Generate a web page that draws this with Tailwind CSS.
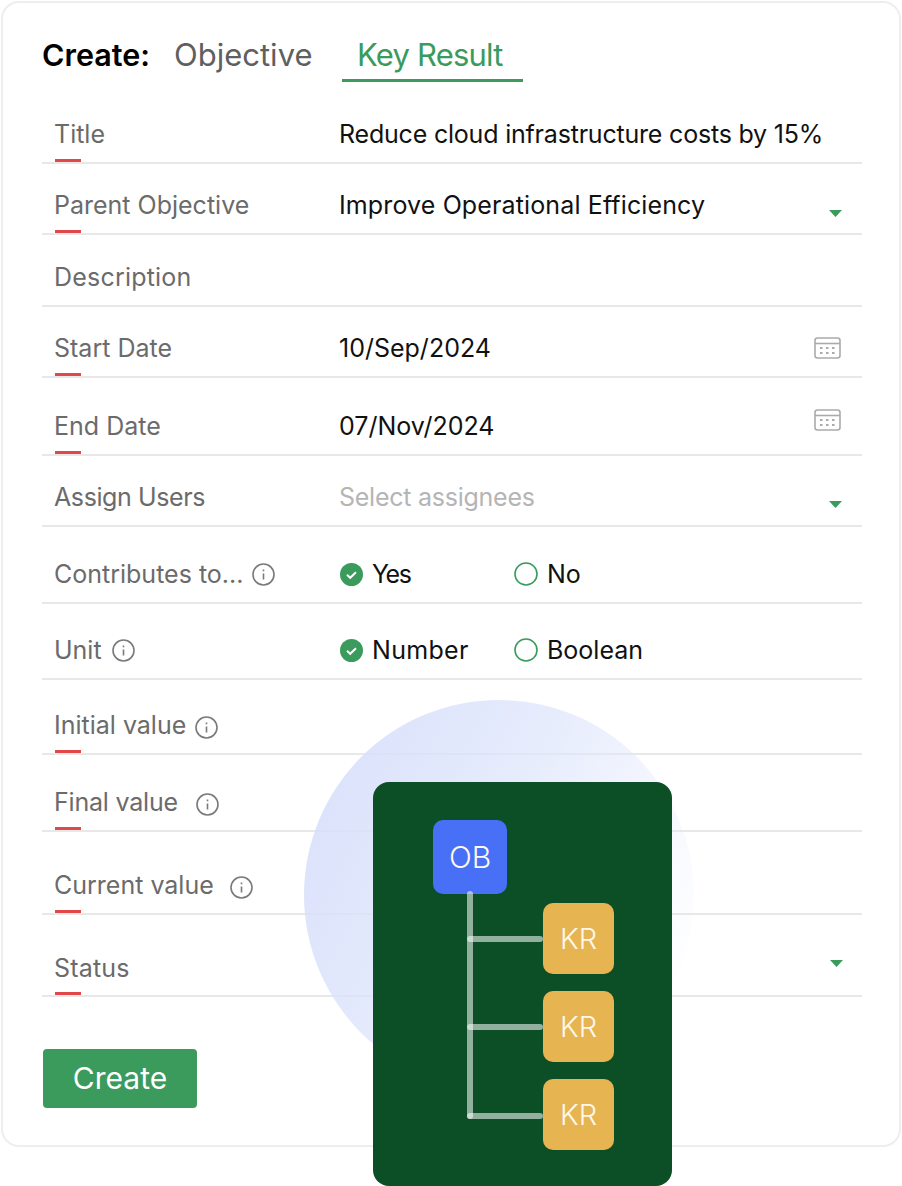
<!DOCTYPE html>
<html lang="en">
<head>
    <meta charset="UTF-8">
    <meta name="viewport" content="width=device-width, initial-scale=1.0">
    <title>Create Key Result</title>
    <script src="https://cdn.jsdelivr.net/npm/@tailwindcss/browser@4"></script>
</head>
<body class="bg-white font-['Inter',sans-serif] overflow-hidden">
    <div class="relative w-[902px] h-[1186px] overflow-hidden">
        <!-- Form card -->
        <div class="ml-px mt-px w-[900px] h-[1146px] rounded-[18px] border-2 border-[#eeeeee] pl-[39px] pr-[37px] pt-[32px]">
            <!-- Tabs -->
            <div class="flex items-start h-[47px] text-[31px] leading-[40px]">
                <span class="font-semibold text-black w-[132px] text-[30.5px]">Create:</span>
                <span class="text-[#5f5f5f] w-[168px]">Objective</span>
                <span class="text-[#3a9b5c] w-[181px] h-[47px] border-b-[3px] border-[#3a9b5c] pl-[15px] tracking-[-0.8px]">Key Result</span>
            </div>

            <!-- Rows -->
            <div class="text-[25px] leading-[32px] text-[#111111]">
                <div class="relative flex items-end h-[82px] border-b-2 border-[#e8e8e8] pb-[12px]">
                    <span class="w-[297px] pl-[12px] text-[#6b6b6b]">Title</span>
                    <span class="tracking-[-0.2px]">Reduce cloud infrastructure costs by 15%</span>
                    <i class="absolute left-[13px] bottom-0 w-[26px] h-[3px] bg-[#e0484a]"></i>
                </div>
                <div class="relative flex items-end h-[71px] border-b-2 border-[#e8e8e8] pb-[12px]">
                    <span class="w-[297px] pl-[12px] text-[#6b6b6b]">Parent Objective</span>
                    <span class="tracking-[0.13px]">Improve Operational Efficiency</span>
                    <svg class="ml-auto mr-[20px] mb-[4px]" width="13" height="7" viewBox="0 0 13 7"><path d="M0 0h13L6.500 7z" fill="#3a9b5c"/></svg>
                    <i class="absolute left-[13px] bottom-0 w-[26px] h-[3px] bg-[#e0484a]"></i>
                </div>
                <div class="relative flex items-end h-[72px] border-b-2 border-[#e8e8e8] pb-[12px]">
                    <span class="w-[297px] pl-[12px] text-[#6b6b6b] tracking-[0.2px]">Description</span>
                </div>
                <div class="relative flex items-end h-[71px] border-b-2 border-[#e8e8e8] pb-[12px]">
                    <span class="w-[297px] pl-[12px] text-[#6b6b6b]">Start Date</span>
                    <span>10/Sep/2024</span>
                    <svg class="ml-auto mr-[21px] mb-[5px]" width="27" height="22" viewBox="0 0 27 22" fill="none" stroke="#aaaaaa" stroke-width="1.600"><rect x="1" y="1" width="25" height="20" rx="2.500"/><path d="M1 6.500h25"/><path d="M6 11h2.500M12 11h2.500M18 11h2.500M6 16h2.500M12 16h2.500M18 16h2.500" stroke-width="2"/></svg>
                    <i class="absolute left-[13px] bottom-0 w-[26px] h-[3px] bg-[#e0484a]"></i>
                </div>
                <div class="relative flex items-end h-[78px] border-b-2 border-[#e8e8e8] pb-[12px]">
                    <span class="w-[297px] pl-[12px] text-[#6b6b6b]">End Date</span>
                    <span>07/Nov/2024</span>
                    <svg class="ml-auto mr-[21px] mb-[11px]" width="27" height="22" viewBox="0 0 27 22" fill="none" stroke="#aaaaaa" stroke-width="1.600"><rect x="1" y="1" width="25" height="20" rx="2.500"/><path d="M1 6.500h25"/><path d="M6 11h2.500M12 11h2.500M18 11h2.500M6 16h2.500M12 16h2.500M18 16h2.500" stroke-width="2"/></svg>
                    <i class="absolute left-[13px] bottom-0 w-[26px] h-[3px] bg-[#e0484a]"></i>
                </div>
                <div class="relative flex items-end h-[71px] border-b-2 border-[#e8e8e8] pb-[12px]">
                    <span class="w-[297px] pl-[12px] text-[#6b6b6b] tracking-[-0.4px]">Assign Users</span>
                    <span class="text-[#b5b5b5] tracking-[-0.25px]">Select assignees</span>
                    <svg class="ml-auto mr-[20px] mb-[5px]" width="13" height="7" viewBox="0 0 13 7"><path d="M0 0h13L6.500 7z" fill="#3a9b5c"/></svg>
                </div>
                <div class="relative flex items-end h-[77px] border-b-2 border-[#e8e8e8] pb-[12px]">
                    <span class="flex items-center gap-[9px] w-[298px] pl-[12px] text-[#6b6b6b]">Contributes to...
                        <svg width="23" height="23" viewBox="0 0 23 23" fill="none" stroke="#7a7a7a" stroke-width="1.600"><circle cx="11.500" cy="11.500" r="10.500"/><path d="M11.500 10.500v6M11.500 6.500v1.800"/></svg>
                    </span>
                    <span class="flex items-center gap-[9px] w-[174px]">
                        <svg width="23" height="23" viewBox="0 0 23 23"><circle cx="11.500" cy="11.500" r="11.500" fill="#3a9b5c"/><path d="M7 11.800l3.200 3 5.800-5.600" fill="none" stroke="#ffffff" stroke-width="2"/></svg><span class="tracking-[-1.5px]">Yes</span>
                    </span>
                    <span class="flex items-center gap-[9px]">
                        <svg width="24" height="24" viewBox="0 0 24 24"><circle cx="12" cy="12" r="11" fill="none" stroke="#3a9b5c" stroke-width="1.600"/></svg>No
                    </span>
                </div>
                <div class="relative flex items-end h-[76px] border-b-2 border-[#e8e8e8] pb-[12px]">
                    <span class="flex items-center gap-[10px] w-[298px] pl-[12px] text-[#6b6b6b]">Unit
                        <svg width="23" height="23" viewBox="0 0 23 23" fill="none" stroke="#7a7a7a" stroke-width="1.600"><circle cx="11.500" cy="11.500" r="10.500"/><path d="M11.500 10.500v6M11.500 6.500v1.800"/></svg>
                    </span>
                    <span class="flex items-center gap-[9px] w-[174px]">
                        <svg width="23" height="23" viewBox="0 0 23 23"><circle cx="11.500" cy="11.500" r="11.500" fill="#3a9b5c"/><path d="M7 11.800l3.200 3 5.800-5.600" fill="none" stroke="#ffffff" stroke-width="2"/></svg><span class="tracking-[0.3px]">Number</span>
                    </span>
                    <span class="flex items-center gap-[9px]">
                        <svg width="24" height="24" viewBox="0 0 24 24"><circle cx="12" cy="12" r="11" fill="none" stroke="#3a9b5c" stroke-width="1.600"/></svg>Boolean
                    </span>
                </div>
                <div class="relative flex items-end h-[75px] border-b-2 border-[#e8e8e8] pb-[12px]">
                    <span class="flex items-center gap-[9px] pl-[12px] text-[#6b6b6b]">Initial value
                        <svg class="mt-[4px]" width="23" height="23" viewBox="0 0 23 23" fill="none" stroke="#7a7a7a" stroke-width="1.600"><circle cx="11.500" cy="11.500" r="10.500"/><path d="M11.500 10.500v6M11.500 6.500v1.800"/></svg>
                    </span>
                    <i class="absolute left-[13px] bottom-0 w-[26px] h-[3px] bg-[#e0484a]"></i>
                </div>
                <div class="relative flex items-end h-[77px] border-b-2 border-[#e8e8e8] pb-[12px]">
                    <span class="flex items-center gap-[18px] pl-[12px] text-[#6b6b6b] tracking-[-0.2px]">Final value
                        <svg class="mt-[4px]" width="23" height="23" viewBox="0 0 23 23" fill="none" stroke="#7a7a7a" stroke-width="1.600"><circle cx="11.500" cy="11.500" r="10.500"/><path d="M11.500 10.500v6M11.500 6.500v1.800"/></svg>
                    </span>
                    <i class="absolute left-[13px] bottom-0 w-[26px] h-[3px] bg-[#e0484a]"></i>
                </div>
                <div class="relative flex items-end h-[83px] border-b-2 border-[#e8e8e8] pb-[12px]">
                    <span class="flex items-center gap-[16px] pl-[12px] text-[#6b6b6b]">Current value
                        <svg class="mt-[4px]" width="23" height="23" viewBox="0 0 23 23" fill="none" stroke="#7a7a7a" stroke-width="1.600"><circle cx="11.500" cy="11.500" r="10.500"/><path d="M11.500 10.500v6M11.500 6.500v1.800"/></svg>
                    </span>
                    <i class="absolute left-[13px] bottom-0 w-[26px] h-[3px] bg-[#e0484a]"></i>
                </div>
                <div class="relative flex items-end h-[82px] border-b-2 border-[#e8e8e8] pb-[11px]">
                    <span class="pl-[12px] text-[#6b6b6b] tracking-[0.2px]">Status</span>
                    <svg class="ml-auto mr-[19px] mb-[17px]" width="13" height="7" viewBox="0 0 13 7"><path d="M0 0h13L6.500 7z" fill="#3a9b5c"/></svg>
                    <i class="absolute left-[13px] bottom-0 w-[26px] h-[3px] bg-[#e0484a]"></i>
                </div>
            </div>

            <button class="mt-[52px] ml-px w-[154px] h-[59px] rounded-[4px] bg-[#3b9b5c] text-white text-[30px]">Create</button>
        </div>

        <!-- Circle behind the diagram -->
        <div class="absolute left-[304px] top-[700px] w-[390px] h-[390px] rounded-full bg-linear-115 from-[#d3dcfa]/90 via-[#dfe6fc]/75 via-45% to-white/0 to-90%"></div>

        <!-- Diagram -->
        <div class="absolute left-[373px] top-[782px] w-[299px] h-[404px] rounded-[16px] bg-[#0c4f26] text-[#fdf8ec] text-[29px] font-light">
            <div class="absolute left-[60px] top-[38px] w-[74px] h-[74px] rounded-[10px] bg-[#4870f6] text-[30px] flex items-center justify-center">OB</div>
            <div class="absolute left-[94px] top-[109px] w-[6px] h-[228px] rounded-full bg-white/55"></div>
            <div class="absolute left-[94px] top-[154px] w-[76px] h-[6px] rounded-full bg-white/55"></div>
            <div class="absolute left-[94px] top-[242px] w-[76px] h-[6px] rounded-full bg-white/55"></div>
            <div class="absolute left-[94px] top-[331px] w-[76px] h-[6px] rounded-full bg-white/55"></div>
            <div class="absolute left-[170px] top-[121px] w-[71px] h-[71px] rounded-[10px] bg-[#e6b552] flex items-center justify-center">KR</div>
            <div class="absolute left-[170px] top-[209px] w-[71px] h-[71px] rounded-[10px] bg-[#e6b552] flex items-center justify-center">KR</div>
            <div class="absolute left-[170px] top-[297px] w-[71px] h-[71px] rounded-[10px] bg-[#e6b552] flex items-center justify-center">KR</div>
        </div>
    </div>
</body>
</html>
